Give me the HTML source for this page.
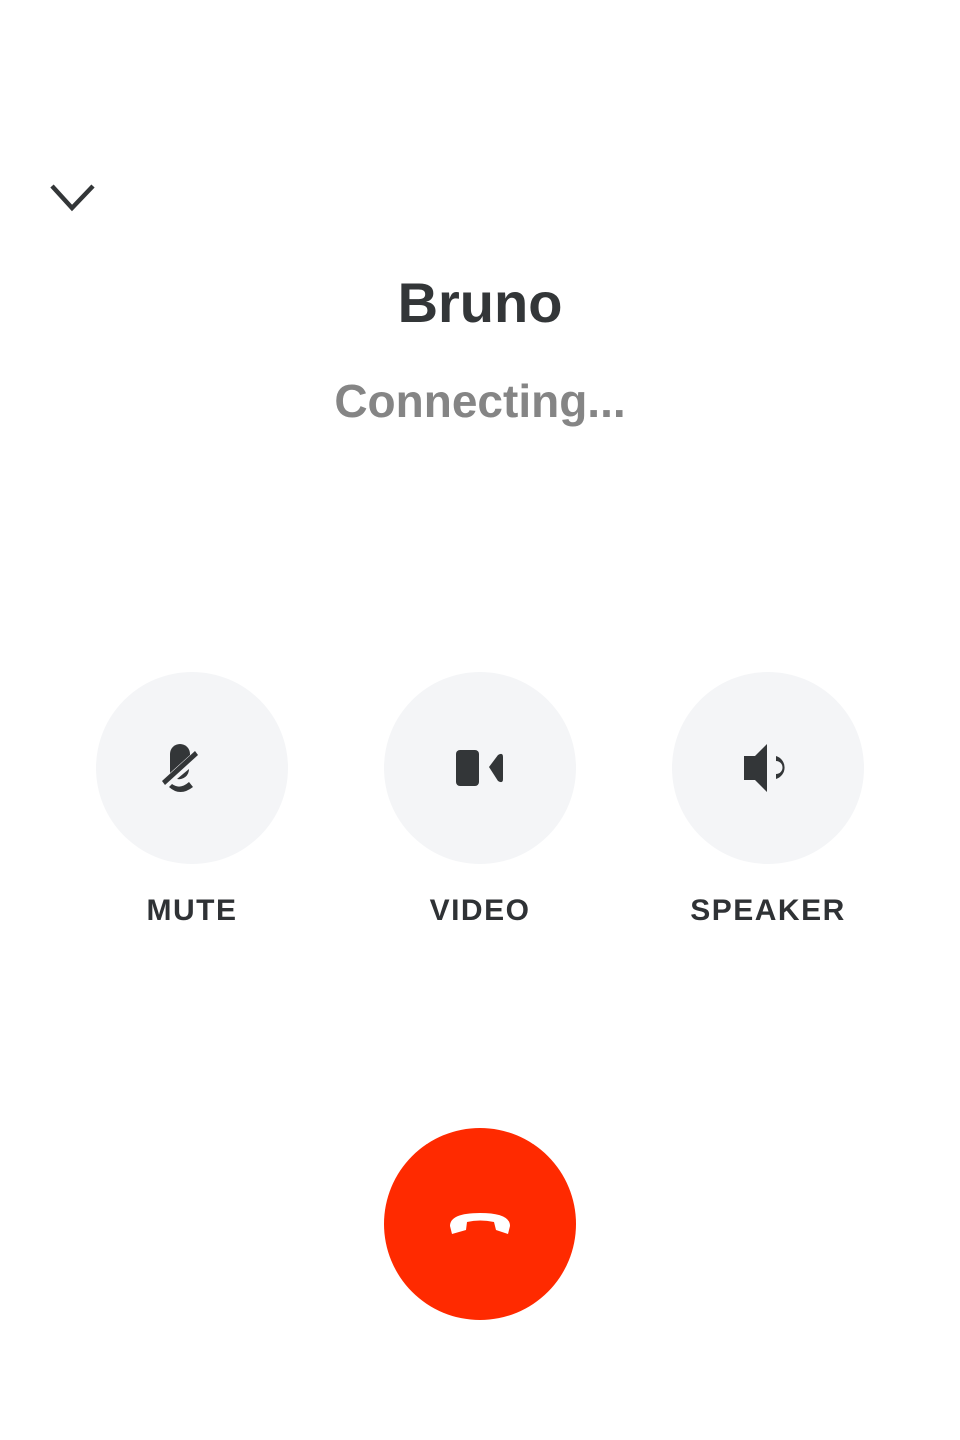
<!DOCTYPE html>
<html><head><style>
body{margin:0;width:960px;height:1440px;background:#fff;font-family:"Liberation Sans",sans-serif;position:relative;overflow:hidden}
.t{position:absolute;left:0;width:960px;text-align:center}
.c{position:absolute;width:192px;height:192px;border-radius:50%;background:#f4f5f7}
.l{position:absolute;width:240px;text-align:center;font-size:30px;font-weight:bold;color:#2f3235;letter-spacing:1.5px;top:894px}
</style></head><body>
<svg style="position:absolute;left:0;top:0" width="960" height="1440">
<polyline points="52,186 72,208 93,186" fill="none" stroke="#333638" stroke-width="4.5"/>
</svg>
<div class="t" style="top:270px;font-size:56px;font-weight:bold;color:#333638">Bruno</div>
<div class="t" style="top:374px;font-size:46px;font-weight:bold;color:#858585">Connecting...</div>
<div class="c" style="left:96px;top:672px"></div>
<div class="c" style="left:384px;top:672px"></div>
<div class="c" style="left:672px;top:672px"></div>
<svg style="position:absolute;left:0;top:0" width="960" height="1440">
<g fill="#333638">
<path d="M170,773 L170,754 A10,10 0 0 1 190,754 L190,755 L170,773 Z"/>
<path d="M162,781 L195,751 L198,755 L165,785 Z"/>
<path d="M177,779 L189,769 A10,10 0 0 1 177,779 Z"/>
<path d="M169,787 Q180,797 193,787 L189,782 Q180,790 172,784 Z" transform="translate(0,0)"/>
<rect x="456" y="750" width="23" height="36" rx="4"/>
<path d="M489,767 L498,755 Q503,752 503,757 L503,779 Q503,784 498,781 Z"/>
<path d="M744,756 L755,756 L767,744 L767,792 L755,780 L744,780 Z"/>
<path d="M776,756 A12,12 0 0 1 776,779 L776,774 A6,6 0 0 0 776,761 Z"/>
</g>
</svg>
<div class="l" style="left:72px">MUTE</div>
<div class="l" style="left:360px">VIDEO</div>
<div class="l" style="left:648px">SPEAKER</div>
<div class="c" style="left:384px;top:1128px;background:#ff2a00"></div>
<svg style="position:absolute;left:0;top:0" width="960" height="1440">
<path d="M450,1226 Q450,1213 480,1213 Q510,1213 510,1226 L508,1234 L496,1230 L494,1222 Q480,1219 467,1222 L466,1230 L452,1234 Z" fill="#fff"/>
</svg>
</body></html>
